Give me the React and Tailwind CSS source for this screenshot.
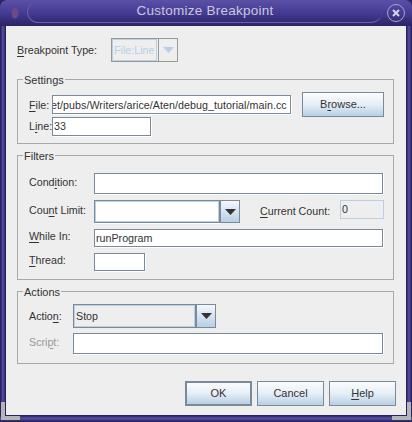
import React from "react";

const font = { fontFamily: '"Liberation Sans", Arial, sans-serif' };

function Label({ text, u, className = "" }) {
  // u = index of the mnemonic letter
  return (
    <span className={`text-[10.7px] leading-[14px] text-[#333333] whitespace-nowrap ${className}`}>
      {text.slice(0, u)}
      <span className="underline underline-offset-2">{text[u]}</span>
      {text.slice(u + 1)}
    </span>
  );
}

function Input({ className = "", value = "" }) {
  return (
    <div className={`bg-white border border-[#7a8a99] shadow-[1px_1px_0_#ffffff] text-[10.7px] leading-[14px] text-[#333333] flex items-center pl-px overflow-hidden whitespace-nowrap ${className}`}>
      {value}
    </div>
  );
}

function Arrow({ disabled }) {
  return (
    <svg width="11" height="6" viewBox="0 0 11 6">
      <path d="M0 0H11L5.5 6Z" fill={disabled ? "#b8cfe5" : "#333333"} />
    </svg>
  );
}

function ArrowButton({ disabled }) {
  return (
    <div className={`w-5 self-stretch flex items-center justify-center border ${disabled ? "border-[#999999] bg-[#eeeeee]" : "border-[#7a8a99] bg-gradient-to-b from-[#f4f8fc] to-[#b8cfe5]"}`}>
      <Arrow disabled={disabled} />
    </div>
  );
}

function Button({ children, className = "" }) {
  return (
    <div className={`flex items-center justify-center border border-[#7a8a99] bg-gradient-to-b from-[#fbfcfe] via-[#e6eef6] to-[#b8cfe5] text-[11px] text-[#333333] ${className}`}>
      {children}
    </div>
  );
}

function Group({ title, className = "", children }) {
  return (
    <div className={`relative mx-[11px] w-[377px] border border-[#a9a9a9] ${className}`}>
      <span className="absolute left-[5px] -top-[7px] bg-[#eeeeee] px-[1px] text-[11px] leading-[14px] text-[#333333]">{title}</span>
      {children}
    </div>
  );
}

function SideStrip() {
  return <div className="w-[6px] shrink-0 bg-gradient-to-r from-[#1f1a52] via-[#5a50a6] to-[#1f1a52]" />;
}

export default function App() {
  return (
    <div style={font} className="relative w-[412px] h-[422px] flex flex-col bg-[#2a2463] overflow-hidden">
      {/* titlebar */}
      <div className="h-[26px] shrink-0 flex items-center bg-gradient-to-b from-[#5a50a6] via-[#463b93] to-[#2a2463] rounded-t-[7px]">
        <svg className="ml-[11px]" width="8" height="12" viewBox="0 0 8 12">
          <ellipse cx="4" cy="6" rx="3.5" ry="5.5" fill="#6b4a86" />
        </svg>
        <div className="ml-[8px] w-[355px] h-[22px] mb-[2px] rounded-full border-b border-l border-[#6a60ad] flex items-center justify-center text-[13.5px] tracking-[0.25px] text-[#c9c7de]">
          Customize Breakpoint
        </div>
        <div className="ml-[5px] w-[18px] h-[18px] rounded-full border-[1.5px] border-[#a9a5cf] flex items-center justify-center">
          <svg width="8" height="8" viewBox="0 0 8 8">
            <path d="M1 1L7 7M7 1L1 7" stroke="#d5d5e8" strokeWidth="2" />
          </svg>
        </div>
      </div>

      <div className="flex h-[389px] shrink-0">
        <SideStrip />
        <div className="w-[400px] bg-[#eeeeee] flex flex-col">
          {/* type row */}
          <div className="flex items-center h-[24px] mt-[12px] ml-[11px]">
            <Label text="Breakpoint Type:" u={0} className="w-[94px]" />
            <div className="w-[47px] h-full border border-[#999999] border-r-0 outline outline-1 -outline-offset-2 outline-[#b8cfe5] flex items-center pl-[2px] text-[10.7px] text-[#b8cfe5]">
              File:Line
            </div>
            <ArrowButton disabled />
          </div>

          {/* settings */}
          <Group title="Settings" className="mt-[17px] h-[65px]">
            <div className="flex items-start">
              <div className="flex flex-col pt-[15px] gap-[3px]">
                <div className="flex items-center h-[19px]">
                  <Label text="File:" u={0} className="pl-[11px] w-[34px]" />
                  <Input
                    className="w-[239px] h-full"
                    value={<span className="-ml-[3px] tracking-[0.05px]">et/pubs/Writers/arice/Aten/debug_tutorial/main.cc</span>}
                  />
                </div>
                <div className="flex items-center h-[19px]">
                  <Label text="Line:" u={1} className="pl-[11px] w-[34px] pb-[2px]" />
                  <Input className="w-[99px] h-full" value={<span className="pb-[2px]">33</span>} />
                </div>
              </div>
              <Button className="ml-[11px] mt-[12px] w-[82px] h-[25px]">
                <span>B<span className="underline underline-offset-2">r</span>owse...</span>
              </Button>
            </div>
          </Group>

          {/* filters */}
          <Group title="Filters" className="mt-[11px] h-[125px]">
            <div className="flex items-center mt-[17px] h-[21px]">
              <Label text="Condition:" u={4} className="pl-[11px] w-[76px] pb-[4px]" />
              <Input className="w-[289px] h-full" />
            </div>
            <div className="flex items-center mt-[6px] h-[23px]">
              <Label text="Count Limit:" u={3} className="pl-[11px] w-[76px] pb-[4px]" />
              <Input className="w-[126px] h-full outline outline-1 -outline-offset-2 outline-[#b8cfe5]" />
              <ArrowButton />
              <Label text="Current Count:" u={0} className="ml-[20px] w-[80px] -mt-[2px]" />
              <div className="w-[44px] h-[19px] -mt-[4px] border border-[#b8cfe5] text-[10.7px] text-[#333333] flex items-center pl-[1px]">0</div>
            </div>
            <div className="flex items-center mt-[6px] h-[18px]">
              <Label text="While In:" u={0} className="pl-[11px] w-[76px] pb-[4px]" />
              <Input className="w-[289px] h-full" value="runProgram" />
            </div>
            <div className="flex items-center mt-[6px] h-[18px]">
              <Label text="Thread:" u={0} className="pl-[11px] w-[76px] pb-[4px]" />
              <Input className="w-[51px] h-full" />
            </div>
          </Group>

          {/* actions */}
          <Group title="Actions" className="mt-[11px] h-[73px]">
            <div className="flex items-center mt-[12px] h-[24px]">
              <Label text="Action:" u={5} className="pl-[11px] w-[55px]" />
              <div className="w-[123px] h-full border border-[#7a8a99] outline outline-1 -outline-offset-2 outline-[#b8cfe5] flex items-center pl-[2px] text-[10.7px] text-[#333333]">Stop</div>
              <ArrowButton />
            </div>
            <div className="flex items-center mt-[5px] h-[21px]">
              <Label text="Script:" u={4} className="pl-[11px] w-[55px] pb-[4px] !text-[#999999]" />
              <Input className="w-[310px] h-full" />
            </div>
          </Group>

          {/* buttons */}
          <div className="flex justify-end gap-[5px] mt-[17px] mr-[10px]">
            <Button className="w-[67px] h-[25px] border-2">OK</Button>
            <Button className="w-[67px] h-[25px]">Cancel</Button>
            <Button className="w-[67px] h-[25px]">
              <span><span className="underline underline-offset-2">H</span>elp</span>
            </Button>
          </div>
        </div>
        <SideStrip />
      </div>

      {/* bottom frame */}
      <div className="h-[7px] shrink-0 bg-gradient-to-b from-[#1f1a52] via-[#5a50a6] to-[#1f1a52]" />

      {/* resize grips over the frame corners */}
      <div className="absolute left-[1px] bottom-[2px] w-[19px] h-[18px] border-l-[4px] border-b-[4px] border-[#b5b5b5]" />
      <div className="absolute right-[1px] bottom-[2px] w-[19px] h-[18px] border-r-[4px] border-b-[4px] border-[#b5b5b5]" />
    </div>
  );
}
